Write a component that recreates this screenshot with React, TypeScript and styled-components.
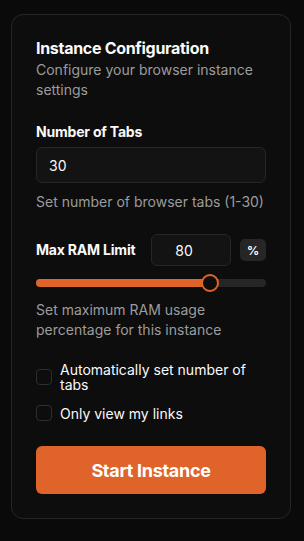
import React, { useState } from 'react';
import styled, { createGlobalStyle } from 'styled-components';

const GlobalStyle = createGlobalStyle`
  html, body {
    margin: 0;
    padding: 0;
    background: #0a0a0a;
  }
  body {
    font-family: Inter, "Noto Sans", "Liberation Sans", sans-serif;
    color: #fafafa;
    -webkit-font-smoothing: antialiased;
  }
  * { box-sizing: border-box; }
`;

const Page = styled.div`
  min-height: 541px;
  padding: 14px 13px 22px 11px;
`;

const Card = styled.div`
  width: 280px;
  background: #0d0d0d;
  border: 1px solid #262626;
  border-radius: 12px;
  padding: 21px 24px 24px;
  display: flex;
  flex-direction: column;
`;

const Title = styled.h2`
  margin: 0;
  font-size: 16px;
  line-height: 24px;
  font-weight: 700;
  letter-spacing: -0.3px;
`;

const Subtitle = styled.p`
  margin: 0;
  font-size: 14px;
  line-height: 20px;
  color: #9c9c9c;
`;

const Field = styled.div<{ $top: number }>`
  margin-top: ${p => p.$top}px;
  display: flex;
  flex-direction: column;
`;

const Label = styled.label`
  font-size: 14px;
  line-height: 20px;
  font-weight: 700;
  letter-spacing: -0.2px;
`;

const TextInput = styled.input`
  margin-top: 5px;
  height: 36px;
  width: 100%;
  background: #131313;
  border: 1px solid #262626;
  border-radius: 6px;
  color: #fafafa;
  font: inherit;
  font-size: 14px;
  padding: 0 12px;
  outline: none;
`;

const Help = styled.p<{ $top?: number }>`
  margin: ${p => p.$top ?? 9}px 0 0;
  font-size: 14px;
  line-height: 20px;
  color: #9c9c9c;
`;

const RamRow = styled.div`
  display: flex;
  align-items: center;
`;

const RamInput = styled.input`
  margin-left: auto;
  width: 80px;
  height: 32px;
  background: #131313;
  border: 1px solid #262626;
  border-radius: 6px;
  color: #fafafa;
  font: inherit;
  font-size: 14px;
  text-align: center;
  padding: 0 14px 0 0;
  outline: none;
`;

const Unit = styled.span`
  margin-left: 9px;
  width: 26px;
  height: 22px;
  border-radius: 5px;
  background: #262626;
  display: flex;
  align-items: center;
  justify-content: center;
  font-size: 12px;
  font-weight: 700;
`;

const SliderWrap = styled.div`
  margin-top: 7px;
  height: 20px;
  display: flex;
  align-items: center;
`;

const Track = styled.div`
  position: relative;
  flex: 1;
  height: 8px;
  border-radius: 4px;
  background: #262626;
`;

const Fill = styled.div`
  height: 100%;
  border-radius: 4px;
  background: #e0642a;
`;

const Thumb = styled.div`
  position: absolute;
  top: 50%;
  width: 18px;
  height: 18px;
  border-radius: 50%;
  background: #0d0d0d;
  border: 2px solid #e0642a;
  transform: translate(-50%, -50%);
`;

const Checks = styled.div`
  margin-top: 22px;
  display: flex;
  flex-direction: column;
  gap: 13px;
`;

const CheckRow = styled.label`
  display: flex;
  align-items: center;
  gap: 8px;
  font-size: 14px;
  line-height: 15px;
  cursor: pointer;
`;

const Box = styled.span`
  flex: none;
  width: 16px;
  height: 16px;
  border: 1px solid #2e2e2e;
  border-radius: 4px;
`;

const StartButton = styled.button`
  margin-top: 25px;
  height: 48px;
  width: 100%;
  border: none;
  border-radius: 6px;
  background: #e0632a;
  color: #fff;
  font: inherit;
  font-size: 18px;
  font-weight: 700;
  letter-spacing: -0.3px;
  cursor: pointer;
`;

export default function App() {
  const [tabs, setTabs] = useState('30');
  const [ram] = useState(80);
  const min = 10;
  const max = 100;
  const pct = (ram - min) / (max - min);

  return (
    <Page>
      <GlobalStyle />
      <Card>
        <Title>Instance Configuration</Title>
        <Subtitle>Configure your browser instance settings</Subtitle>

        <Field $top={22}>
          <Label>Number of Tabs</Label>
          <TextInput value={tabs} onChange={e => setTabs(e.target.value)} />
          <Help>Set number of browser tabs (1-30)</Help>
        </Field>

        <Field $top={22}>
          <RamRow>
            <Label>Max RAM Limit</Label>
            <RamInput value={ram} readOnly />
            <Unit>%</Unit>
          </RamRow>
          <SliderWrap>
            <Track>
              <Fill style={{ width: `calc(9px + ${pct} * (100% - 18px))` }} />
              <Thumb style={{ left: `calc(9px + ${pct} * (100% - 18px))` }} />
            </Track>
          </SliderWrap>
          <Help $top={7}>Set maximum RAM usage percentage for this instance</Help>
        </Field>

        <Checks>
          <CheckRow>
            <Box />
            Automatically set number of tabs
          </CheckRow>
          <CheckRow>
            <Box />
            Only view my links
          </CheckRow>
        </Checks>

        <StartButton>Start Instance</StartButton>
      </Card>
    </Page>
  );
}
